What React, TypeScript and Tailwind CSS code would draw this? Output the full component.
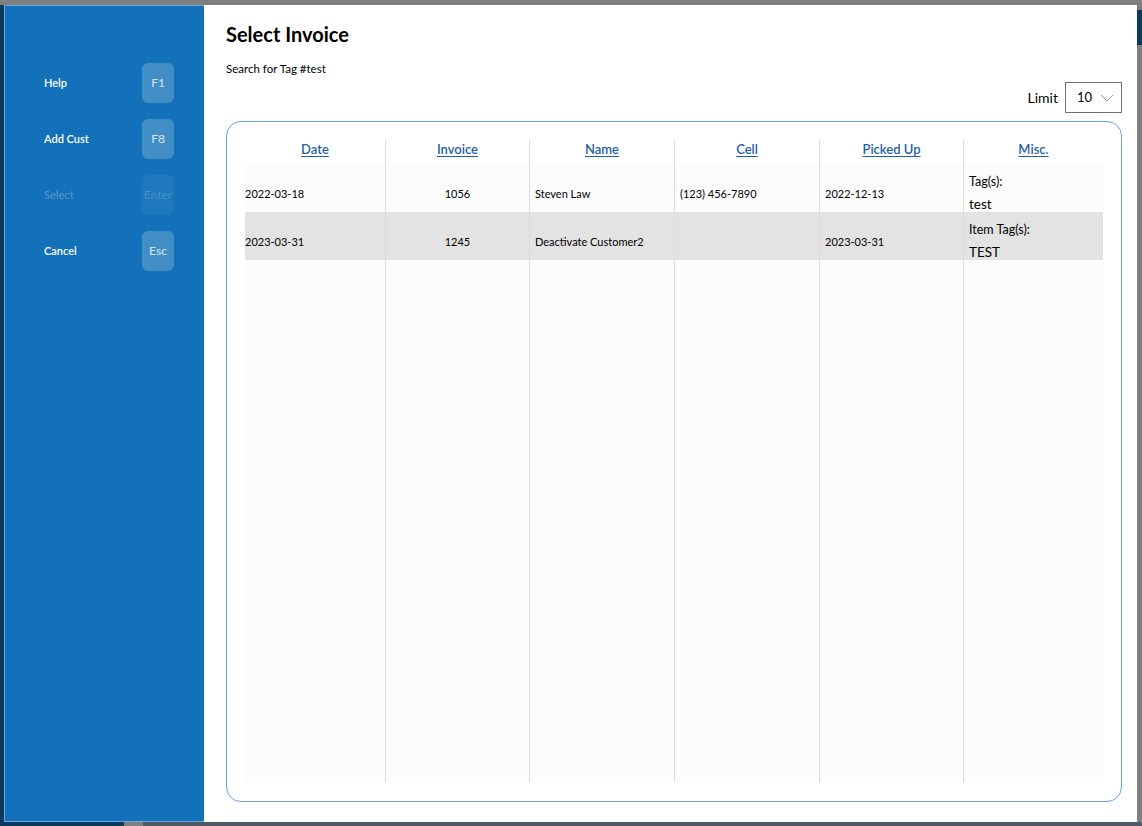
import React from 'react';

type Row = {
    date: string;
    invoice: string;
    name: string;
    cell: string;
    pickedUp: string;
    miscLabel: string;
    miscValue: string;
};

const ROWS: Row[] = [
    { date: '2022-03-18', invoice: '1056', name: 'Steven Law', cell: '(123) 456-7890', pickedUp: '2022-12-13', miscLabel: 'Tag(s):', miscValue: 'test' },
    { date: '2023-03-31', invoice: '1245', name: 'Deactivate Customer2', cell: '', pickedUp: '2023-03-31', miscLabel: 'Item Tag(s):', miscValue: 'TEST' },
];

const COLUMNS = ['Date', 'Invoice', 'Name', 'Cell', 'Picked Up', 'Misc.'];

const SideAction: React.FC<{ label: string; keyName: string; disabled?: boolean }> = ({ label, keyName, disabled }) => (
    <div className="flex items-center justify-between pl-[39px] pr-[30px] h-10">
        <span className={`text-[11px] font-semibold ${disabled ? 'text-white/25' : 'text-white'}`}>{label}</span>
        <span
            className={`w-8 h-10 rounded-md flex items-center justify-center text-[12px] ${disabled ? 'bg-white/5 text-white/20' : 'bg-white/20 text-white/80'}`}
        >
            {keyName}
        </span>
    </div>
);

const cellBorder = 'border-r border-[#dddddd] last:border-r-0';
const gridCols = 'grid grid-cols-[141px_144px_145px_145px_144px_1fr]';

export default function App() {
    return (
        <div className="relative w-[1142px] h-[826px] bg-[#7f7f7f] overflow-hidden" style={{ fontFamily: 'Lato, "Noto Sans", sans-serif' }}>
            {/* background app peeking out */}
            <div className="absolute left-0 top-[5px] bottom-0 w-1 bg-[#0b3a5e]" />
            <div className="absolute right-0 top-[10px] h-[35px] w-[5px] bg-[#0b3a5e]" />
            <div className="absolute left-0 bottom-0 h-1 w-[124px] bg-[#0b3a5e]" />
            <div className="absolute left-[143px] right-0 bottom-0 h-1 bg-[#505a64]" />

            {/* modal */}
            <div className="absolute left-1 top-[5px] w-[1133px] h-[817px] flex bg-white">
                <aside className="w-[200px] h-full bg-[#1271b8] border border-[#6aa6e8] border-r-0 pt-[57px] flex flex-col gap-4">
                    <SideAction label="Help" keyName="F1" />
                    <SideAction label="Add Cust" keyName="F8" />
                    <SideAction label="Select" keyName="Enter" disabled />
                    <SideAction label="Cancel" keyName="Esc" />
                </aside>

                <main className="flex-1 flex flex-col pl-[22px] pr-[15px] pt-[17px] pb-5 text-black">
                    <h1 className="text-[20px] font-bold leading-6">Select Invoice</h1>
                    <p className="text-[11.5px] mt-[15px] leading-4">Search for Tag #test</p>

                    <div className="flex items-center justify-end gap-[7px] mt-[5px]">
                        <span className="text-[14px]">Limit</span>
                        <div className="w-[57px] h-[31px] border border-[#707070] flex items-center pl-[11px] pr-[7px] justify-between">
                            <span className="text-[13px]">10</span>
                            <svg width="14" height="8" viewBox="0 0 14 8" fill="none" stroke="#9a9a9a" strokeWidth="1">
                                <path d="M1 1 L7 7 L13 1" />
                            </svg>
                        </div>
                    </div>

                    <div className="mt-2 flex-1 border border-[#6aa0e8] rounded-[15px] p-[18px] pb-[19px] flex">
                        <div className="flex-1 flex flex-col">
                            <div className={`${gridCols} h-6 bg-white`}>
                                {COLUMNS.map(col => (
                                    <div key={col} className={`${cellBorder} flex items-start justify-center`}>
                                        <span className="text-[13px] leading-[18px] font-semibold text-[#1f5fa6] underline underline-offset-2">{col}</span>
                                    </div>
                                ))}
                            </div>

                            {ROWS.map((row, i) => (
                                <div key={row.invoice} className={`${gridCols} h-12 text-[11px] ${i % 2 === 0 ? 'bg-[#fcfcfc]' : 'bg-[#e3e3e3]'}`}>
                                    <div className={`${cellBorder} flex items-center pt-[10px]`}>{row.date}</div>
                                    <div className={`${cellBorder} flex items-center justify-center pt-[10px]`}>{row.invoice}</div>
                                    <div className={`${cellBorder} flex items-center pl-[5px] pt-[10px]`}>{row.name}</div>
                                    <div className={`${cellBorder} flex items-center pl-[5px] pt-[10px]`}>{row.cell}</div>
                                    <div className={`${cellBorder} flex items-center pl-[5px] pt-[10px]`}>{row.pickedUp}</div>
                                    <div className={`${cellBorder} flex flex-col pt-[10px] pl-[5px]`}>
                                        <span className="text-[12.5px] leading-4">{row.miscLabel}</span>
                                        <span className="text-[13.5px] leading-5 mt-1">{row.miscValue}</span>
                                    </div>
                                </div>
                            ))}

                            <div className={`${gridCols} flex-1 bg-[#fcfcfc]`}>
                                {COLUMNS.map(col => (
                                    <div key={col} className={cellBorder} />
                                ))}
                            </div>
                        </div>
                    </div>
                </main>
            </div>
        </div>
    );
}
